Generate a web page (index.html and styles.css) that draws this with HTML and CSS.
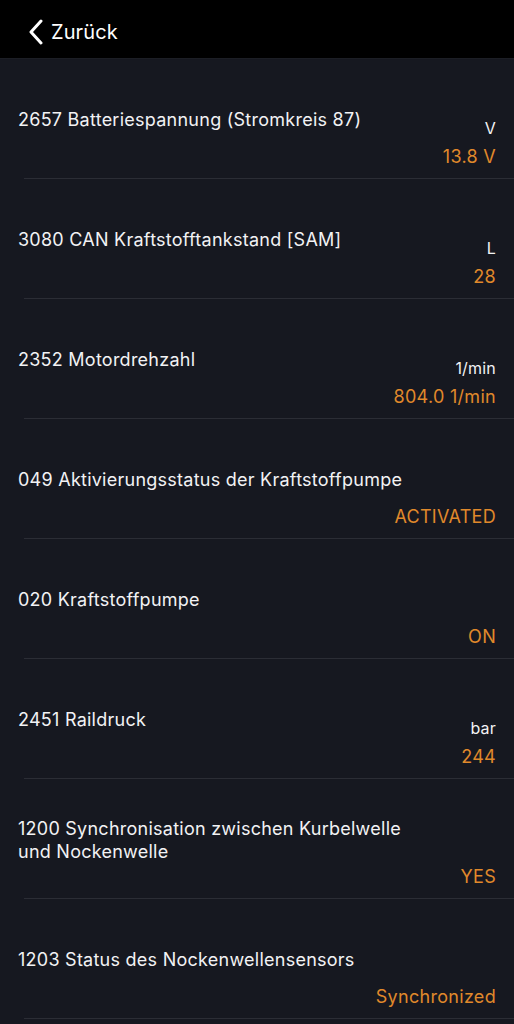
FILE: index.html
```html
<!DOCTYPE html>
<html lang="de">
<head>
<meta charset="utf-8">
<link rel="stylesheet" href="styles.css">
</head>
<body>
<header class="nav">
  <svg class="chev" viewBox="0 0 16 26" width="16" height="26"><path d="M13 2 L3 13 L13 24" fill="none" stroke="#fff" stroke-width="3" stroke-linecap="round" stroke-linejoin="round"/></svg>
  <span class="back">Zurück</span>
</header>
<main class="list">
  <div class="row"><div class="title">2657 Batteriespannung (Stromkreis 87)</div><div class="vals"><div class="unit">V</div><div class="value">13.8 V</div></div></div>
  <div class="row"><div class="title">3080 CAN Kraftstofftankstand [SAM]</div><div class="vals"><div class="unit">L</div><div class="value">28</div></div></div>
  <div class="row"><div class="title">2352 Motordrehzahl</div><div class="vals"><div class="unit">1/min</div><div class="value">804.0 1/min</div></div></div>
  <div class="row"><div class="title">049 Aktivierungsstatus der Kraftstoffpumpe</div><div class="vals"><div class="value">ACTIVATED</div></div></div>
  <div class="row"><div class="title">020 Kraftstoffpumpe</div><div class="vals"><div class="value">ON</div></div></div>
  <div class="row"><div class="title">2451 Raildruck</div><div class="vals"><div class="unit">bar</div><div class="value">244</div></div></div>
  <div class="row"><div class="title">1200 Synchronisation zwischen Kurbelwelle und Nockenwelle</div><div class="vals"><div class="value">YES</div></div></div>
  <div class="row"><div class="title">1203 Status des Nockenwellensensors</div><div class="vals"><div class="value">Synchronized</div></div></div>
  <div class="row"><div class="title"></div><div class="vals"></div></div>
</main>
</body>
</html>
```
FILE: styles.css
```css
html, body {
  margin: 0;
  padding: 0;
  background: #161820;
  font-family: Inter, "Noto Sans", sans-serif;
  color: #f2f2f4;
  overflow: hidden;
}
.nav {
  height: 59px;
  background: #000;
  border-bottom: 1px solid #1c1e25;
  display: flex;
  align-items: center;
  padding-left: 28px;
  padding-top: 6px;
  gap: 7px;
  box-sizing: border-box;
}
.chev { display: block; }
.back {
  font-size: 20px;
  line-height: 24px;
  color: #fff;
  letter-spacing: 0.1px;
}
.list { display: block; }
.row {
  height: 119px;
  display: grid;
  margin-left: 24px;
  border-bottom: 1px solid #2b2d35;
}
.title {
  grid-area: 1 / 1;
  align-self: center;
  justify-self: start;
  margin-left: -6px;
  margin-top: 2px;
  max-width: 400px;
  font-size: 18px;
  line-height: 23px;
  letter-spacing: 0.25px;
}
.vals {
  grid-area: 1 / 1;
  align-self: end;
  justify-self: end;
  margin-right: 18px;
  margin-bottom: 10px;
  text-align: right;
  display: flex;
  flex-direction: column;
  align-items: flex-end;
}
.unit {
  font-size: 16px;
  line-height: 20px;
  margin-bottom: 8px;
  letter-spacing: 0.2px;
}
.value {
  font-size: 18px;
  line-height: 22px;
  color: #e0892b;
  letter-spacing: 0.3px;
}
```
